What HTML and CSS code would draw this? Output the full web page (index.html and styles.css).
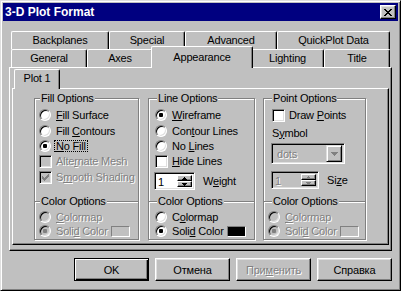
FILE: index.html
```html
<!DOCTYPE html>
<html lang="ru">
<head>
    <meta charset="UTF-8">
    <title>3-D Plot Format</title>
    <link rel="stylesheet" href="styles.css">
</head>
<body>

<div class="window">
    <div class="titlebar">
        <span class="title">3-D Plot Format</span>
        <button class="close-btn">
            <svg width="8" height="7" viewBox="0 0 8 7" shape-rendering="crispEdges"><path d="M0 0h2v1h-2z M6 0h2v1h-2z M1 1h2v1h-2z M5 1h2v1h-2z M2 2h4v1h-4z M3 3h2v1h-2z M2 4h4v1h-4z M1 5h2v1h-2z M5 5h2v1h-2z M0 6h2v1h-2z M6 6h2v1h-2z" fill="#000"/></svg>
        </button>
    </div>

    <div class="tabset">
        <div class="tab-row">
            <div class="tab tab-backplanes">Backplanes</div>
            <div class="tab tab-special">Special</div>
            <div class="tab tab-advanced">Advanced</div>
            <div class="tab tab-quickplot">QuickPlot Data</div>
        </div>
        <div class="tab-row">
            <div class="tab tab-general">General</div>
            <div class="tab tab-axes">Axes</div>
            <div class="tab current tab-appearance">Appearance</div>
            <div class="tab tab-lighting">Lighting</div>
            <div class="tab tab-title">Title</div>
        </div>

        <div class="panel panel-outer">
            <div class="tab-row inner-tabs">
                <div class="tab current tab-plot">Plot 1</div>
            </div>

            <div class="panel panel-inner">
                <!-- fill -->
                <div class="group group-fill">
                    <span class="group-title">Fill Options</span>
                    <div class="opts top">
                        <div class="row"><span class="radio"></span><span><u>F</u>ill Surface</span></div>
                        <div class="row"><span class="radio"></span><span>Fill <u>C</u>ontours</span></div>
                        <div class="row"><span class="radio checked"></span><span class="focus"><u>N</u>o Fill</span></div>
                        <div class="row dis"><span class="check off"></span><span>Alte<u>r</u>nate Mesh</span></div>
                        <div class="row dis"><span class="check off">
                            <svg width="7" height="7" viewBox="0 0 7 7" shape-rendering="crispEdges"><path d="M6 0h1v1h-1z M5 1h2v1h-2z M0 2h1v1h-1z M4 2h3v1h-3z M0 3h2v1h-2z M3 3h3v1h-3z M0 4h5v1h-5z M1 5h3v1h-3z M2 6h1v1h-1z" fill="#808080"/></svg>
                        </span><span>S<u>m</u>ooth Shading</span></div>
                    </div>
                    <div class="color-sec">
                        <span class="group-title">Color Options</span>
                        <div class="opts">
                            <div class="row dis"><span class="radio off"></span><span><u>C</u>olormap</span></div>
                            <div class="row dis"><span class="radio off checked"></span><span>Soli<u>d</u> Color</span><span class="swatch"></span></div>
                        </div>
                    </div>
                </div>

                <!-- line -->
                <div class="group group-line">
                    <span class="group-title">Line Options</span>
                    <div class="opts top">
                        <div class="row"><span class="radio checked"></span><span><u>W</u>ireframe</span></div>
                        <div class="row"><span class="radio"></span><span>Con<u>t</u>our Lines</span></div>
                        <div class="row"><span class="radio"></span><span>No <u>L</u>ines</span></div>
                        <div class="row"><span class="check"></span><span><u>H</u>ide Lines</span></div>
                        <div class="row spin-row">
                            <div class="spin">
                                <span class="spin-value">1</span>
                                <span class="spin-btns">
                                    <span class="spin-btn"><svg width="5" height="3" viewBox="0 0 5 3" shape-rendering="crispEdges"><path d="M2 0h1v1h-1z M1 1h3v1h-3z M0 2h5v1h-5z" fill="#000"/></svg></span>
                                    <span class="spin-btn"><svg width="5" height="3" viewBox="0 0 5 3" shape-rendering="crispEdges"><path d="M0 0h5v1h-5z M1 1h3v1h-3z M2 2h1v1h-1z" fill="#000"/></svg></span>
                                </span>
                            </div>
                            <span class="spin-label">W<u>e</u>ight</span>
                        </div>
                    </div>
                    <div class="color-sec">
                        <span class="group-title">Color Options</span>
                        <div class="opts">
                            <div class="row"><span class="radio"></span><span>C<u>o</u>lormap</span></div>
                            <div class="row"><span class="radio checked"></span><span>Soli<u>d</u> Color</span><span class="swatch black"></span></div>
                        </div>
                    </div>
                </div>

                <!-- point -->
                <div class="group group-point">
                    <span class="group-title">Point Options</span>
                    <div class="opts top">
                        <div class="row"><span class="check"></span><span>Draw <u>P</u>oints</span></div>
                        <div class="row label-row"><span>S<u>y</u>mbol</span></div>
                        <div class="combo">
                            <span class="combo-text dis">dots</span>
                            <span class="combo-btn"><svg width="7" height="4" viewBox="0 0 7 4" shape-rendering="crispEdges"><path d="M0 0h7v1h-7z M1 1h5v1h-5z M2 2h3v1h-3z M3 3h1v1h-1z" fill="#808080"/></svg></span>
                        </div>
                        <div class="row spin-row">
                            <div class="spin spin-off">
                                <span class="spin-value dis">1</span>
                                <span class="spin-btns">
                                    <span class="spin-btn"><svg width="5" height="3" viewBox="0 0 5 3" shape-rendering="crispEdges"><path d="M2 0h1v1h-1z M1 1h3v1h-3z M0 2h5v1h-5z" fill="#808080"/></svg></span>
                                    <span class="spin-btn"><svg width="5" height="3" viewBox="0 0 5 3" shape-rendering="crispEdges"><path d="M0 0h5v1h-5z M1 1h3v1h-3z M2 2h1v1h-1z" fill="#808080"/></svg></span>
                                </span>
                            </div>
                            <span class="spin-label">Si<u>z</u>e</span>
                        </div>
                    </div>
                    <div class="color-sec">
                        <span class="group-title">Color Options</span>
                        <div class="opts">
                            <div class="row dis"><span class="radio off"></span><span><u>C</u>olormap</span></div>
                            <div class="row dis"><span class="radio off checked"></span><span>Soli<u>d</u> Color</span><span class="swatch"></span></div>
                        </div>
                    </div>
                </div>
            </div>
        </div>
    </div>

    <div class="buttons">
        <button class="btn default">OK</button>
        <button class="btn">Отмена</button>
        <button class="btn dis">При<u>м</u>енить</button>
        <button class="btn">Справка</button>
    </div>
</div>

</body>
</html>
```

FILE: styles.css
```css
* {
    box-sizing: border-box;
}

body {
    margin: 0;
    background: #c0c0c0;
    font-family: "Liberation Sans", Arial, sans-serif;
    font-size: 11px;
    letter-spacing: -0.2px;
    color: #000;
}

u {
    text-underline-offset: 1px;
}

.dis {
    color: #808080;
    text-shadow: 1px 1px 0 #fff;
}

/* window frame */
.window {
    width: 401px;
    height: 291px;
    padding: 2px;
    border: 1px solid;
    border-color: #dfdfdf #000 #000 #dfdfdf;
    box-shadow: inset 1px 1px #fff, inset -1px -1px #808080;
}

.titlebar {
    height: 18px;
    display: flex;
    align-items: center;
    justify-content: space-between;
    padding: 0 2px 0 2px;
    background: #000080;
}

.title {
    color: #fff;
    font-weight: bold;
    font-size: 12px;
    letter-spacing: 0;
}

.close-btn {
    width: 16px;
    height: 14px;
    padding: 0;
    display: flex;
    align-items: center;
    justify-content: center;
    background: #c0c0c0;
    border: 1px solid;
    border-color: #fff #000 #000 #fff;
    box-shadow: inset -1px -1px #808080, inset 1px 1px #dfdfdf;
}

/* tabs */
.tabset {
    width: 383px;
    margin: 10px 0 0 6px;
}

.tab-row {
    display: flex;
    height: 18px;
    padding-left: 2px;
}

.tab {
    flex: none;
    height: 18px;
    border: 1px solid #fff;
    border-right-color: #000;
    border-bottom: 0;
    border-radius: 2px 2px 0 0;
    box-shadow: inset -1px 0 #808080;
    background: #c0c0c0;
    text-align: center;
    line-height: 17px;
    white-space: nowrap;
}

.tab.current {
    position: relative;
    z-index: 1;
}

.tab-backplanes { width: 98px; }
.tab-special { width: 76px; }
.tab-advanced { width: 92px; }
.tab-quickplot { width: 113px; }
.tab-general { width: 76px; }
.tab-axes { width: 66px; }
.tab-lighting { width: 73px; }
.tab-title { width: 66px; }

.tab-appearance {
    width: 102px;
    height: 22px;
    margin: -3px -2px 0;
    line-height: 20px;
}

.panel {
    border: 1px solid;
    border-color: #fff #000 #000 #fff;
    box-shadow: inset -1px -1px #808080;
}

.panel-outer {
    height: 184px;
    padding: 1px 0 0 1px;
}

.inner-tabs {
    height: 19px;
    padding-left: 3px;
}

.tab-plot {
    width: 46px;
    height: 20px;
    line-height: 17px;
}

.panel-inner {
    width: 377px;
    height: 157px;
    margin-left: 1px;
    display: flex;
    align-items: flex-start;
    padding: 9px 0 0 21px;
}

/* group boxes */
.group {
    height: 142px;
    display: flex;
    flex-direction: column;
    border: 1px solid #808080;
    box-shadow: inset 1px 1px #fff, 1px 1px #fff;
}

.group-fill { width: 105px; }
.group-line { width: 107px; margin-left: 9px; }
.group-point { width: 103px; margin-left: 8px; }

.group-title {
    align-self: flex-start;
    flex: none;
    height: 13px;
    margin: -7px 0 0 5px;
    padding: 0 1px;
    line-height: 13px;
    background: #c0c0c0;
}

.group-line .group-title,
.group-point .group-title {
    margin-left: 8px;
}

.opts {
    display: flex;
    flex-direction: column;
    padding-left: 4px;
}

.opts.top {
    margin-top: 2px;
}

.group-line .opts { padding-left: 6px; }
.group-point .opts.top { padding-left: 8px; }

.row {
    flex: none;
    display: flex;
    align-items: center;
    height: 16px;
    white-space: nowrap;
}

.opts.top .row:nth-child(2),
.opts.top .row:nth-child(3) {
    height: 15px;
}

.color-sec {
    flex: none;
    margin-top: auto;
    height: 38px;
    display: flex;
    flex-direction: column;
    border-top: 1px solid #808080;
    box-shadow: inset 0 1px #fff;
}

.color-sec .opts {
    margin-top: 1px;
}

.color-sec .row:first-child { height: 15px; }
.color-sec .row:last-child { height: 14px; }

/* radios and checkboxes */
.radio {
    flex: none;
    width: 12px;
    height: 12px;
    margin-right: 5px;
    display: flex;
    align-items: center;
    justify-content: center;
    border-radius: 50%;
    border: 1px solid;
    border-color: #808080 #fff #fff #808080;
    box-shadow: inset 1px 1px #000, inset -1px -1px #dfdfdf;
    background: #fff;
}

.radio.checked::after {
    content: "";
    width: 4px;
    height: 4px;
    border-radius: 1px;
    background: #000;
}

.radio.off {
    background: #c0c0c0;
}

.radio.off.checked::after {
    background: #808080;
}

.check {
    flex: none;
    width: 13px;
    height: 13px;
    margin-right: 4px;
    display: flex;
    align-items: center;
    justify-content: center;
    border: 1px solid;
    border-color: #808080 #fff #fff #808080;
    box-shadow: inset 1px 1px #000, inset -1px -1px #dfdfdf;
    background: #fff;
}

.check.off {
    background: #c0c0c0;
}

.focus {
    margin-left: -1px;
    padding: 0 1px;
    line-height: 10px;
    outline: 1px dotted #000;
}

.swatch {
    flex: none;
    width: 19px;
    height: 11px;
    margin-left: 3px;
    border: 1px solid;
    border-color: #808080 #fff #fff #808080;
}

.swatch.black {
    background: #000;
}

/* spin boxes and combo */
.spin-row {
    height: 18px;
    margin-top: 3px;
}

.group-point .spin-row {
    margin-top: 7px;
}

.spin {
    flex: none;
    width: 41px;
    height: 18px;
    margin-left: -1px;
    display: flex;
    padding: 2px;
    border: 1px solid;
    border-color: #808080 #fff #fff #808080;
    box-shadow: inset 1px 1px #000, inset -1px -1px #dfdfdf;
    background: #fff;
}

.spin-off {
    width: 48px;
    background: #c0c0c0;
}

.spin-value {
    flex: 1;
    padding-left: 1px;
    line-height: 14px;
}

.spin-btns {
    width: 15px;
    display: flex;
    flex-direction: column;
}

.spin-btn {
    height: 7px;
    display: flex;
    align-items: center;
    justify-content: center;
    border: 1px solid;
    border-color: #fff #000 #000 #fff;
    box-shadow: inset -1px -1px #808080;
    background: #c0c0c0;
}

.spin-label {
    margin-left: 8px;
}

.label-row {
    margin-top: 2px;
}

.combo {
    flex: none;
    width: 74px;
    height: 21px;
    margin: 3px 0 0 -1px;
    display: flex;
    align-items: center;
    padding: 2px;
    border: 1px solid;
    border-color: #808080 #fff #fff #808080;
    box-shadow: inset 1px 1px #000, inset -1px -1px #dfdfdf;
    background: #c0c0c0;
}

.combo-text {
    flex: 1;
    padding-left: 3px;
}

.combo-btn {
    width: 16px;
    height: 17px;
    display: flex;
    align-items: center;
    justify-content: center;
    border: 1px solid;
    border-color: #dfdfdf #000 #000 #dfdfdf;
    box-shadow: inset 1px 1px #fff, inset -1px -1px #808080;
}

/* dialog buttons */
.buttons {
    display: flex;
    gap: 6px;
    margin: 7px 0 0 71px;
}

.btn {
    width: 75px;
    height: 23px;
    padding: 0;
    font: inherit;
    letter-spacing: inherit;
    color: #000;
    background: #c0c0c0;
    border: 1px solid;
    border-color: #fff #000 #000 #fff;
    box-shadow: inset -1px -1px #808080, inset 1px 1px #dfdfdf;
}

.btn.default {
    border-color: #000;
    box-shadow: inset 1px 1px #fff, inset -1px -1px #000, inset -2px -2px #808080;
}

.btn.dis {
    color: #808080;
    text-shadow: 1px 1px 0 #fff;
}
```
